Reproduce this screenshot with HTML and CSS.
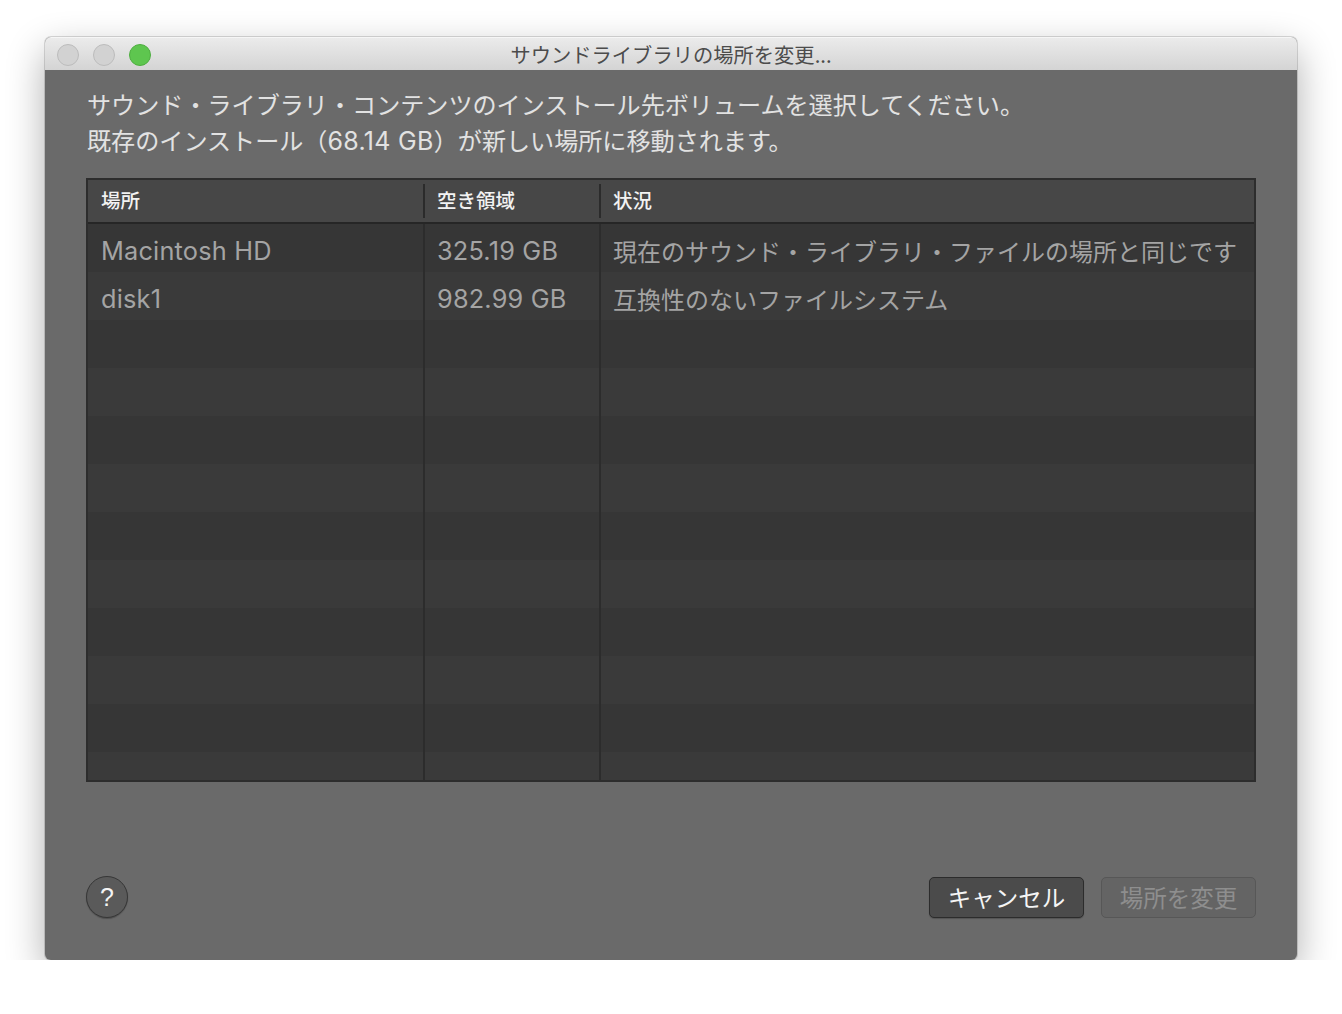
FILE: index.html
```html
<!DOCTYPE html>
<html lang="ja">
<head>
<meta charset="utf-8">
<title>サウンドライブラリの場所を変更...</title>
<link rel="stylesheet" href="styles.css">
</head>
<body>
<div class="window">
  <div class="titlebar">
    <div class="lights">
      <span class="light light-off"></span>
      <span class="light light-off"></span>
      <span class="light light-green"></span>
    </div>
    <div class="title">サウンドライブラリの場所を変更...</div>
  </div>
  <div class="content">
    <p class="desc">サウンド・ライブラリ・コンテンツのインストール先ボリュームを選択してください。<br>既存のインストール（<span class="latin">68.14 GB</span>）が新しい場所に移動されます。</p>
    <div class="table">
      <div class="thead">
        <div class="th">場所</div>
        <div class="th">空き領域</div>
        <div class="th th-last">状況</div>
      </div>
      <div class="tbody">
        <div class="row"><div class="td latin">Macintosh HD</div><div class="td latin">325.19 GB</div><div class="td td-last">現在のサウンド・ライブラリ・ファイルの場所と同じです</div></div>
        <div class="row"><div class="td latin">disk1</div><div class="td latin">982.99 GB</div><div class="td td-last">互換性のないファイルシステム</div></div>
        <div class="row"><div class="td"></div><div class="td"></div><div class="td td-last"></div></div>
        <div class="row"><div class="td"></div><div class="td"></div><div class="td td-last"></div></div>
        <div class="row"><div class="td"></div><div class="td"></div><div class="td td-last"></div></div>
        <div class="row"><div class="td"></div><div class="td"></div><div class="td td-last"></div></div>
        <div class="row"><div class="td"></div><div class="td"></div><div class="td td-last"></div></div>
        <div class="row"><div class="td"></div><div class="td"></div><div class="td td-last"></div></div>
        <div class="row"><div class="td"></div><div class="td"></div><div class="td td-last"></div></div>
        <div class="row"><div class="td"></div><div class="td"></div><div class="td td-last"></div></div>
        <div class="row"><div class="td"></div><div class="td"></div><div class="td td-last"></div></div>
        <div class="row"><div class="td"></div><div class="td"></div><div class="td td-last"></div></div>
      </div>
    </div>
    <div class="footer">
      <button class="help" type="button">?</button>
      <div class="actions">
        <button class="btn btn-cancel" type="button">キャンセル</button>
        <button class="btn btn-disabled" type="button">場所を変更</button>
      </div>
    </div>
  </div>
</div>
</body>
</html>
```
FILE: styles.css
```css
* { box-sizing: border-box; }

html, body {
  margin: 0;
  background: #ffffff;
}

body {
  padding: 37px 45px 0 45px;
  font-family: Inter, "Noto Sans CJK JP", sans-serif;
}

.window {
  width: 1252px;
  height: 923px;
  border-radius: 6px;
  overflow: hidden;
  background: #6a6a6a;
  box-shadow: 0 0 0 1px rgba(0,0,0,0.14), 0 14px 38px rgba(0,0,0,0.32);
  display: flex;
  flex-direction: column;
}

.titlebar {
  height: 33px;
  flex: 0 0 33px;
  background: linear-gradient(#ebebeb, #d4d4d4);
  border-top: 1px solid #f6f6f6;
  display: flex;
  align-items: center;
  position: relative;
}

.lights {
  display: flex;
  gap: 14px;
  padding-left: 12px;
  padding-top: 1px;
}

.light {
  width: 22px;
  height: 22px;
  border-radius: 50%;
  display: block;
}

.light-off {
  background: #d2d2d2;
  border: 1px solid #bcbcbc;
}

.light-green {
  background: #5ec64f;
  border: 1px solid #4eae40;
}

.title {
  position: absolute;
  left: 0;
  right: 0;
  top: 3px;
  text-align: center;
  font-family: "Noto Sans CJK JP", sans-serif;
  font-size: 20.3px;
  line-height: 26px;
  color: #4c4c4c;
  pointer-events: none;
}

.content {
  flex: 1;
  padding: 16px 41px 42px 41px;
  display: flex;
  flex-direction: column;
}

.desc {
  margin: 0 0 0 1px;
  font-family: "Noto Sans CJK JP", sans-serif;
  font-size: 24.1px;
  line-height: 36px;
  height: 72px;
  color: #e2e2e2;
}

.desc .latin {
  font-family: Inter, sans-serif;
  font-size: 25px;
  line-height: 1;
  letter-spacing: 0.3px;
}

.table {
  margin-top: 20px;
  height: 604px;
  border: 2px solid #2d2d2d;
  background: #373737;
  overflow: hidden;
  display: flex;
  flex-direction: column;
}

.thead {
  display: grid;
  grid-template-columns: 337px 176px 1fr;
  height: 44px;
  flex: 0 0 44px;
  background: #474747;
  border-bottom: 2px solid #262626;
}

.th {
  position: relative;
  padding-left: 13px;
  font-family: "Noto Sans CJK JP", sans-serif;
  font-weight: 500;
  font-size: 19.5px;
  line-height: 40px;
  color: #f2f2f2;
}

.th + .th { padding-left: 12px; }

.th:not(.th-last)::after {
  content: "";
  position: absolute;
  right: 0;
  top: 4px;
  bottom: 4px;
  width: 2px;
  background: #2b2b2b;
}

.tbody {
  display: flex;
  flex-direction: column;
}

.row {
  display: grid;
  grid-template-columns: 337px 176px 1fr;
  height: 48px;
  flex: 0 0 48px;
  background: #363636;
}

.row:nth-child(even) { background: #3a3a3a; }

.td {
  padding-left: 13px;
  padding-top: 3px;
  border-right: 2px solid #2c2c2c;
  font-family: "Noto Sans CJK JP", sans-serif;
  font-size: 24px;
  line-height: 48px;
  color: #a4a4a4;
  white-space: nowrap;
  overflow: hidden;
}

.td.latin {
  font-family: Inter, sans-serif;
  font-size: 25.3px;
  letter-spacing: 0.2px;
}

.td + .td { padding-left: 12px; }

.td-last { border-right: none; }

.footer {
  margin-top: auto;
  display: flex;
  align-items: center;
  justify-content: space-between;
}

.help {
  width: 42px;
  height: 42px;
  border-radius: 50%;
  background: #5a5a5a;
  border: 1px solid #373737;
  box-shadow: 0 1px 1px rgba(0,0,0,0.25);
  color: #f4f4f4;
  font-family: "Liberation Sans", sans-serif;
  font-size: 25px;
  line-height: 40px;
  padding: 0;
  text-align: center;
}

.actions {
  display: flex;
  gap: 17px;
}

.btn {
  width: 155px;
  height: 41px;
  border-radius: 5px;
  font-family: "Noto Sans CJK JP", sans-serif;
  font-size: 23.5px;
  line-height: 38px;
  padding: 0;
  text-align: center;
}

.btn-cancel {
  background: #4b4b4b;
  border: 1px solid #2c2c2c;
  color: #f5f5f5;
  box-shadow: 0 1px 1px rgba(0,0,0,0.2);
}

.btn-disabled {
  background: #646464;
  border: 1px solid #575757;
  color: #8e8e8e;
}
```
